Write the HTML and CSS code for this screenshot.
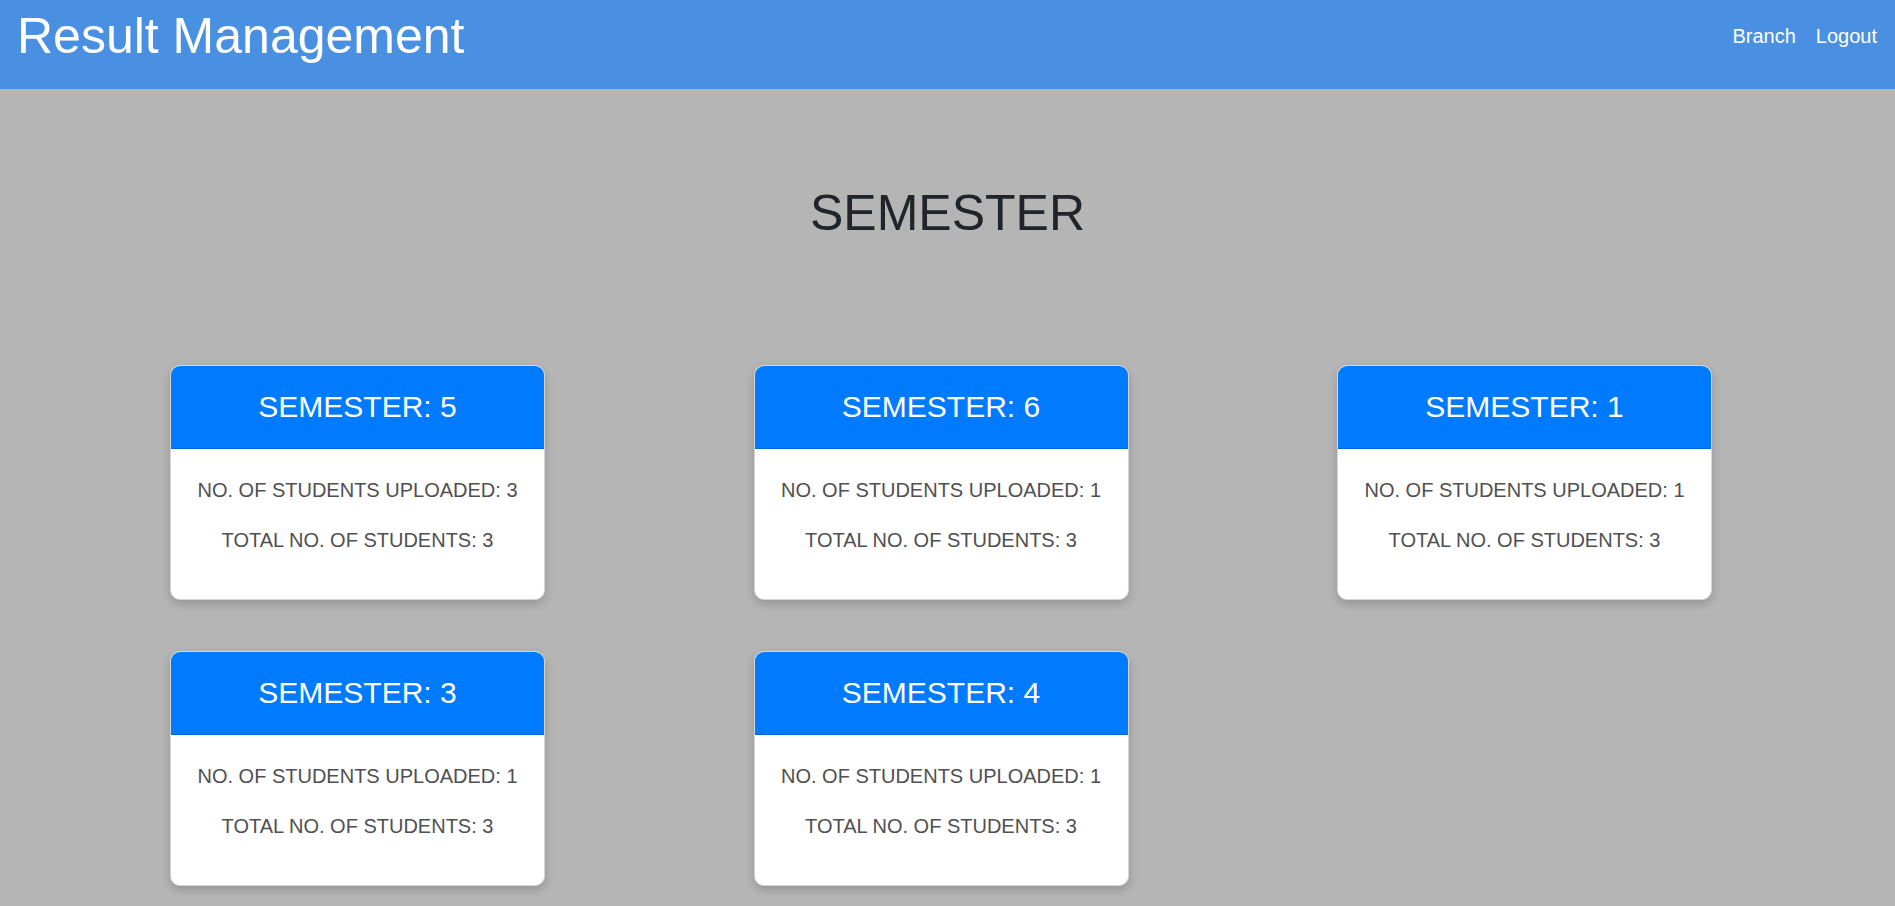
FILE: index.html
```html
<!DOCTYPE html>
<html lang="en">
<head>
<meta charset="utf-8">
<title>Result Management</title>
<link rel="stylesheet" href="styles.css">
</head>
<body>
<header class="navbar">
  <h1 class="brand">Result Management</h1>
  <nav class="nav">
    <a href="#" class="nav-link">Branch</a>
    <a href="#" class="nav-link">Logout</a>
  </nav>
</header>
<main class="main">
  <h2 class="page-title">SEMESTER</h2>
  <div class="cards">
    <div class="card">
      <div class="card-header">SEMESTER: 5</div>
      <div class="card-body">
        <p>NO. OF STUDENTS UPLOADED: 3</p>
        <p>TOTAL NO. OF STUDENTS: 3</p>
      </div>
    </div>
    <div class="card">
      <div class="card-header">SEMESTER: 6</div>
      <div class="card-body">
        <p>NO. OF STUDENTS UPLOADED: 1</p>
        <p>TOTAL NO. OF STUDENTS: 3</p>
      </div>
    </div>
    <div class="card">
      <div class="card-header">SEMESTER: 1</div>
      <div class="card-body">
        <p>NO. OF STUDENTS UPLOADED: 1</p>
        <p>TOTAL NO. OF STUDENTS: 3</p>
      </div>
    </div>
    <div class="card">
      <div class="card-header">SEMESTER: 3</div>
      <div class="card-body">
        <p>NO. OF STUDENTS UPLOADED: 1</p>
        <p>TOTAL NO. OF STUDENTS: 3</p>
      </div>
    </div>
    <div class="card">
      <div class="card-header">SEMESTER: 4</div>
      <div class="card-body">
        <p>NO. OF STUDENTS UPLOADED: 1</p>
        <p>TOTAL NO. OF STUDENTS: 3</p>
      </div>
    </div>
  </div>
</main>
</body>
</html>
```

FILE: styles.css
```css
* { box-sizing: border-box; }

html, body {
  margin: 0;
  padding: 0;
}

body {
  background: #b5b5b5;
  font-family: "Liberation Sans", Arial, sans-serif;
  color: #212529;
  min-height: 906px;
}

.navbar {
  height: 89px;
  background: #4a90e2;
  display: flex;
  justify-content: space-between;
  align-items: flex-start;
  padding: 0 18px 0 17px;
}

.brand {
  margin: 0;
  padding-top: 6px;
  font-size: 50px;
  line-height: 60px;
  font-weight: 400;
  color: #ffffff;
}

.nav {
  display: flex;
  gap: 20px;
  padding-top: 24px;
}

.nav-link {
  color: #ffffff;
  text-decoration: none;
  font-size: 20px;
  line-height: 24px;
}

.main {
  padding-top: 94px;
}

.page-title {
  margin: 0;
  text-align: center;
  font-size: 50px;
  line-height: 60px;
  font-weight: 400;
  color: #212529;
}

.cards {
  margin-top: 122px;
  margin-left: 170px;
  display: grid;
  grid-template-columns: repeat(3, 375px);
  column-gap: 208.5px;
  row-gap: 51px;
}

.card {
  background: #ffffff;
  border: 1px solid #d6d6d6;
  border-radius: 10px;
  overflow: hidden;
  box-shadow: 0 4px 10px rgba(0, 0, 0, 0.18);
}

.card-header {
  background: #007bff;
  color: #ffffff;
  height: 83px;
  border-bottom: 1px solid #0069d9;
  display: flex;
  align-items: center;
  justify-content: center;
  font-size: 30px;
}

.card-body {
  padding: 26px 10px 24px;
  text-align: center;
}

.card-body p {
  margin: 0 0 20px;
  font-size: 20px;
  line-height: 30px;
  color: #505050;
}
```
